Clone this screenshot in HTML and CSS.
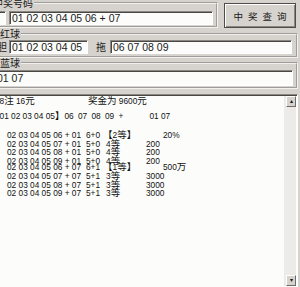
FILE: index.html
```html
<!DOCTYPE html>
<html lang="zh">
<head>
  <meta charset="UTF-8">
  <link rel="stylesheet" href="styles.css">
  <title>中奖查询</title>
</head>
<body>
  <div class="dlg">
    <div class="top">
      <fieldset class="grp g1">
        <legend>中奖号码</legend>
        <div class="line">
          <input class="edit small" type="text" value="">
          <input class="edit grow" type="text" value="01 02 03 04 05 06 + 07">
        </div>
      </fieldset>
      <button class="btn">中奖查询</button>
    </div>

    <fieldset class="grp g2">
      <legend>红球</legend>
      <div class="line">
        <label class="lbl dan-lbl">胆</label>
        <input class="edit dan" type="text" value="01 02 03 04 05">
        <label class="lbl tuo-lbl">拖</label>
        <input class="edit grow" type="text" value="06 07 08 09">
      </div>
    </fieldset>

    <fieldset class="grp g3">
      <legend>蓝球</legend>
      <input class="edit blue" type="text" value="01 07">
    </fieldset>

    <div class="result">
      <div class="text" id="out"></div>
      <div class="vscroll">
        <span class="sbtn">&#9652;</span>
        <span class="sbtn">&#9662;</span>
      </div>
    </div>
  </div>

  <script>
    var rows = [
      ['02 03 04 05 06 + 01', '6+0', '【2等】', '20%'],
      ['02 03 04 05 07 + 01', '5+0', '4等', '200'],
      ['02 03 04 05 08 + 01', '5+0', '4等', '200'],
      ['02 03 04 05 09 + 01', '5+0', '4等', '200'],
      ['02 03 04 05 06 + 07', '6+1', '【1等】', '500万'],
      ['02 03 04 05 07 + 07', '5+1', '3等', '3000'],
      ['02 03 04 05 08 + 07', '5+1', '3等', '3000'],
      ['02 03 04 05 09 + 07', '5+1', '3等', '3000']
    ];

    // wrap chinese runs so they get their own size
    function cn(s) {
      return s.replace(/([^\x00-\x7f]+)/g, '<span class="cn">$1</span>');
    }

    var html = '';
    html += '<div class="head"><span class="cnt">' + cn('共8注 16元') + '</span>' + cn('奖金为 9600元') + '</div>';
    html += '<div class="bet">' + cn('【01 02 03 04 05】') + '<span class="red-tuo">06 07 08 09 +</span>01 07</div>';
    html += '<div class="list">';
    rows.forEach(function (r) {
      var top = r[2].indexOf('【') === 0;
      html += '<div class="row' + (top ? ' top' : '') + '">' +
        '<span class="nums">' + r[0] + '</span>' +
        '<span class="hit">' + r[1] + '</span>' +
        '<span class="lv">' + cn(r[2]) + '</span>' +
        '<span class="amt">' + cn(r[3]) + '</span></div>';
    });
    html += '</div>';
    document.getElementById('out').innerHTML = html;
  </script>
</body>
</html>
```

FILE: styles.css
```css
body {
  margin: 0;
  background: #d6d3ce;
  font-family: "Liberation Sans", "Noto Sans CJK SC", sans-serif;
  color: #222;
  overflow: hidden;
}
.dlg {
  margin-left: -24px;
  width: 322px;
}
.top {
  display: flex;
  align-items: flex-end;
  margin-top: -2px;
}
.grp {
  margin: 0;
  padding: 3px 3px 1px 4px;
  border: 2px groove #f2f1ed;
  min-width: 0;
}
.grp legend {
  font-family: "Noto Sans CJK SC", sans-serif;
  font-size: 10px;
  line-height: 10px;
  padding: 0 1px;
  color: #1a1a1a;
}
.g1 {
  flex: 1;
}
.g1 legend {
  margin-left: 10px;
}
.g2 {
  margin-top: 1px;
  padding: 1px 4px 2px 4px;
}
.g2 legend,
.g3 legend {
  margin-left: 17px;
}
.g3 {
  padding: 2px 3px 1px 4px;
}
.line {
  display: flex;
  align-items: center;
}
.edit {
  box-sizing: border-box;
  height: 14px;
  margin: 0;
  padding: 0 2px;
  background: #fcfdfb;
  border: 1px solid;
  border-color: #8a8782 #fff #fff #8a8782;
  box-shadow: inset 1px 1px #4a4845;
  font-family: "Liberation Sans", sans-serif;
  font-size: 10.5px;
  color: #1a1a1a;
  outline: none;
}
.small {
  width: 24px;
  margin-right: 3px;
}
.grow {
  flex: 1;
  min-width: 0;
}
.lbl {
  font-family: "Noto Sans CJK SC", sans-serif;
  font-size: 10px;
  line-height: 10px;
  width: 10px;
}
.dan-lbl {
  margin: 0 2px 0 15px;
}
.dan {
  width: 79px;
}
.tuo-lbl {
  margin: 0 4px 0 8px;
}
.blue {
  display: block;
  width: 100%;
  height: 16px;
  padding-left: 14px;
}
.btn {
  box-sizing: border-box;
  width: 72px;
  height: 25px;
  margin: 0 2px 0 6px;
  padding: 0 0 0 5px;
  background: #d6d3ce;
  border: 1px solid #4e4c49;
  box-shadow: inset 1px 1px #fff, inset -1px -1px #8a8782;
  font-family: "Noto Sans CJK SC", sans-serif;
  font-size: 9.5px;
  letter-spacing: 5px;
  color: #1a1a1a;
}
.result {
  display: flex;
  height: 192px;
  margin-top: 5px;
  background: #fcfdfb;
  border: 1px solid;
  border-color: #8a8782 #fff #fff #8a8782;
  box-shadow: inset 1px 1px #4a4845;
}
.text {
  flex: 1;
  padding: 2px 0 0 13px;
  font-size: 8.3px;
  line-height: 8px;
  white-space: pre;
  color: #111;
}
.cn {
  font-family: "Noto Sans CJK SC", sans-serif;
  font-size: 9.5px;
  line-height: 0;
}
.cnt {
  display: inline-block;
  width: 98px;
}
.bet {
  margin-top: 7px;
}
.red-tuo {
  display: inline-block;
  width: 85px;
  word-spacing: 2px;
}
.list {
  margin-top: 13px;
  line-height: 8.6px;
}
.row {
  padding-left: 17px;
}
.nums {
  display: inline-block;
  width: 79px;
}
.hit {
  display: inline-block;
  width: 17px;
}
.lv {
  display: inline-block;
  width: 40px;
  padding-left: 3px;
}
.row.top .lv {
  width: 60px;
  padding-left: 0;
}
.vscroll {
  display: flex;
  flex-direction: column;
  justify-content: space-between;
  width: 12px;
  margin: 1px 1px 1px 0;
  background: #ecebe7;
}
.sbtn {
  box-sizing: border-box;
  height: 11px;
  margin-left: 2px;
  background: #d6d3ce;
  border: 1px solid;
  border-color: #fff #6f6d69 #6f6d69 #fff;
  font-size: 6px;
  line-height: 9px;
  text-align: center;
  color: #111;
}
```
